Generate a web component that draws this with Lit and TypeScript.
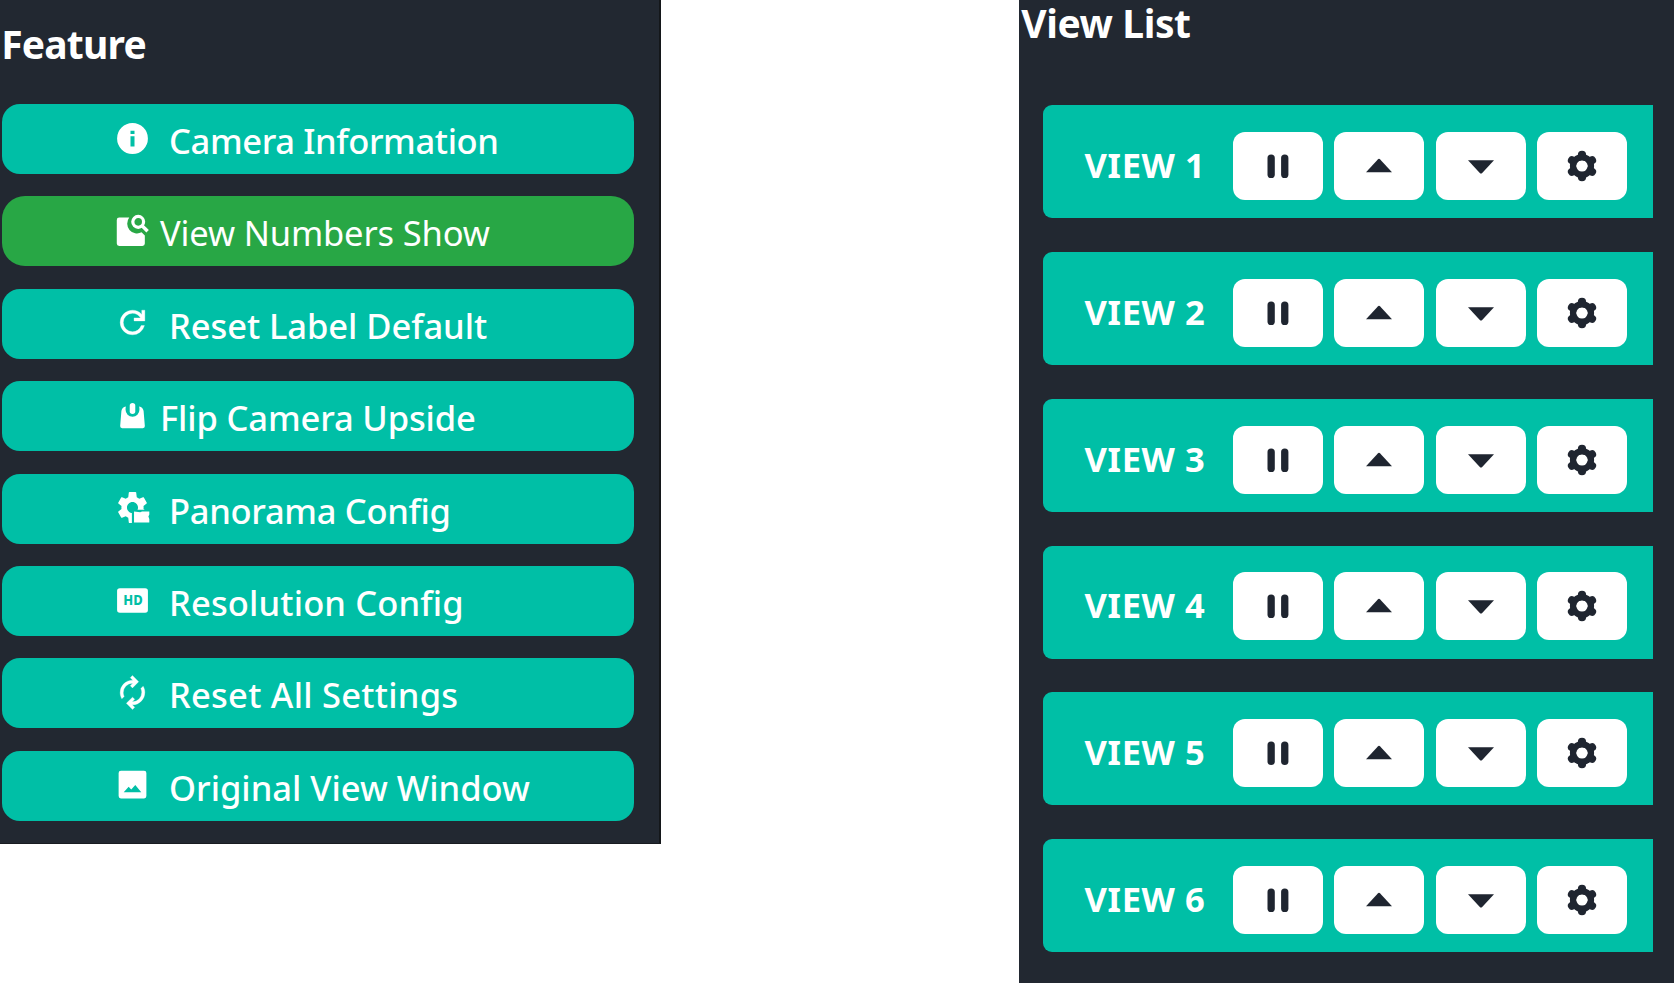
import { LitElement, html, css, svg, nothing, type TemplateResult } from "lit";
import { customElement, property } from "lit/decorators.js";

const GEAR =
  "M19.14 12.94c.04-.3.06-.61.06-.94 0-.32-.02-.64-.07-.94l2.03-1.58c.18-.14.23-.41.12-.61l-1.92-3.32c-.12-.22-.37-.29-.59-.22l-2.39.96c-.5-.38-1.03-.7-1.62-.94L14.4 2.3c-.04-.24-.24-.41-.48-.41h-3.84c-.24 0-.43.17-.47.41l-.36 3.05c-.59.24-1.13.57-1.62.94l-2.39-.96c-.22-.08-.47 0-.59.22L2.74 8.87c-.12.21-.08.47.12.61l2.03 1.58c-.05.3-.09.63-.09.94s.02.64.07.94l-2.03 1.58c-.18.14-.23.41-.12.61l1.92 3.32c.12.22.37.29.59.22l2.39-.96c.5.38 1.03.7 1.62.94l.36 3.05c.05.24.24.41.48.41h3.84c.24 0 .44-.17.47-.41l.36-3.05c.59-.24 1.13-.56 1.62-.94l2.39.96c.22.08.47 0 .59-.22l1.92-3.32c.12-.22.07-.47-.12-.61zM12 15.6c-1.98 0-3.6-1.62-3.6-3.6s1.62-3.6 3.6-3.6 3.6 1.62 3.6 3.6-1.62 3.6-3.6 3.6z";

/* Icons of the feature menu, on a 24-unit grid. */
const FEATURE_ICONS: Record<string, TemplateResult> = {
  info: svg`<path d="M12 2a10 10 0 1 0 0 20 10 10 0 0 0 0-20zm1.3 15.2h-2.6v-6.6h2.6zm0-8.1h-2.6V6.900h2.600z"/>`,
  find: svg`
    <path d="M3.4 3.6H9.900a6.400 6.400 0 0 0 8 9.600L20 15.200v5.200a1.600 1.600 0 0 1-1.600 1.600h-15a1.600 1.600 0 0 1-1.600-1.600V5.200a1.600 1.600 0 0 1 1.600-1.600z"/>
    <circle cx="15.700" cy="6.400" r="3.500" fill="none" stroke="currentColor" stroke-width="2.100"/>
    <path d="M18.200 8.900l3.600 3.600" stroke="currentColor" stroke-width="2.200"/>`,
  refresh: svg`<path stroke="currentColor" stroke-width=".2" d="M12 20q-3.35 0-5.675-2.325T4 12t2.325-5.675T12 4q1.725 0 3.3.713T18 6.75V4h2v7h-7V9h4.2q-.8-1.4-2.187-2.2T12 6Q9.5 6 7.75 7.75T6 12t1.75 4.25T12 18q1.925 0 3.475-1.1T17.65 14h2.1q-.7 2.65-2.85 4.325T12 20"/>`,
  flip: svg`
    <path d="M7.700 6.100C7.500 6.900 7.500 7.700 7.500 8.300a4.500 4.500 0 0 0 9 0c0-.6 0-1.400-.2-2.200 1.700.3 2.700 1.400 2.900 3l.8 9.700a1.300 1.300 0 0 1-1.300 1.400H5.300A1.300 1.300 0 0 1 4 18.800l.8-9.700c.2-1.600 1.200-2.700 2.900-3z"/>
    <rect x="10.200" y="3.900" width="3.600" height="7.200" rx="1.800"/>`,
  panorama: svg`
    <clipPath id="corner"><path d="M0 0H24V13.400H11.600V24H0z"/></clipPath>
    <path d="${GEAR}" clip-path="url(#corner)"/>
    <path d="M13 14.600l4 .5 1.200-.5h4.700v1.900l-.6 1.400.600 1.600v2.200h-9.900z"/>`,
  hd: svg`
    <rect x="2" y="4" width="20" height="16" rx="1.800"/>
    <text x="6" y="15" textLength="12.600" lengthAdjust="spacingAndGlyphs" class="hd">HD</text>`,
  reload: svg`<path stroke="currentColor" stroke-width=".2" d="M5.1 16.05q-.55-.95-.825-1.95T4 12.05q0-3.35 2.325-5.7T12 4h.175l-1.6-1.6 1.4-1.4 4 4-4 4-1.4-1.4 1.6-1.6H12q-2.5 0-4.25 1.763T6 12.05q0 .65.15 1.275t.45 1.225zM12.025 23l-4-4 4-4 1.4 1.4-1.6 1.6H12q2.5 0 4.25-1.762T18 11.95q0-.65-.15-1.275T17.4 9.45l1.5-1.5q.55.95.825 1.95T20 11.95q0 3.35-2.325 5.7T12 20h-.175l1.6 1.6z"/>`,
  image: svg`<path fill-rule="evenodd" d="M4.500 3h15A1.500 1.500 0 0 1 21 4.500v15a1.500 1.500 0 0 1-1.500 1.500h-15A1.500 1.500 0 0 1 3 19.500v-15A1.500 1.500 0 0 1 4.500 3zM6.300 17h11.400l-3.900-4.700-2.600 3-1.700-1.800z"/>`,
};

/* Icons of the view controls, drawn around the centre of a 38px box. */
const VIEW_ICONS: TemplateResult[] = [
  svg`<rect x="-10.500" y="-11.600" width="7.300" height="23.600" rx="3.600"/><rect x="3.100" y="-11.600" width="7.300" height="23.600" rx="3.600"/>`,
  svg`<path d="M-13 6.200L-1.200-6.600Q0-7.800 1.200-6.600L13 6.200z"/>`,
  svg`<path d="M-13-5.800L-1.200 7Q0 8.200 1.200 7L13-5.800z"/>`,
  svg`<path fill="none" stroke="currentColor" stroke-width="8.200" stroke-linecap="round" d="M0-11.200V-8.500M0 11.200V8.500M-10-5.700L-7.600-4.300M10 5.700L7.600 4.300M-10 5.700L-7.600 4.300M10-5.700L7.600-4.300"/><circle r="8.900" fill="none" stroke="currentColor" stroke-width="6.400"/><circle r="5.600" fill="#fff"/>`,
];

interface Feature {
  icon: string;
  label: string;
  active?: boolean;
  tight?: boolean;
  spacing: number;
}

const FEATURES: Feature[] = [
  { icon: "info", label: "Camera Information", spacing: -0.37 },
  { icon: "find", label: "View Numbers Show", active: true, tight: true, spacing: -0.15 },
  { icon: "refresh", label: "Reset Label Default", spacing: -0.06 },
  { icon: "flip", label: "Flip Camera Upside", tight: true, spacing: -0.13 },
  { icon: "panorama", label: "Panorama Config", spacing: -0.3 },
  { icon: "hd", label: "Resolution Config", spacing: 0.15 },
  { icon: "reload", label: "Reset All Settings", spacing: 0.25 },
  { icon: "image", label: "Original View Window", spacing: 0 },
];

@customElement("feature-button")
export class FeatureButton extends LitElement {
  @property({ attribute: false }) feature!: Feature;

  static styles = css`
    :host {
      display: block;
    }
    .button {
      display: flex;
      align-items: center;
      box-sizing: border-box;
      width: 632px;
      height: 70px;
      padding: 0 0 0 112px;
      border: 0;
      border-radius: 18px;
      background: #00bfa6;
      color: #fff;
      font: 500 34.5px/46px "Noto Sans", "Open Sans", sans-serif;
      white-space: nowrap;
    }
    .active {
      border-radius: 23px;
      background: #28a745;
      font-weight: 400;
    }
    .icon {
      flex: none;
      width: 37px;
      height: 37px;
      margin: 0 18px 2px 0;
      fill: currentColor;
    }
    .tight .icon {
      margin-right: 9px;
    }
    .label {
      padding-top: 4px;
    }
    .hd {
      font: 800 8.6px "Noto Sans", sans-serif;
      fill: #00bfa6;
    }
  `;

  render() {
    const f = this.feature;
    return html`<button class="button ${f.active ? "active" : ""} ${f.tight ? "tight" : ""}">
      <svg class="icon" viewBox="0 0 24 24">${FEATURE_ICONS[f.icon] ?? nothing}</svg>
      <span class="label" style="letter-spacing:${f.spacing}px">${f.label}</span>
    </button>`;
  }
}

@customElement("view-card")
export class ViewCard extends LitElement {
  @property({ type: Number }) number = 1;

  static styles = css`
    :host {
      display: block;
    }
    .card {
      display: flex;
      box-sizing: border-box;
      width: 610px;
      height: 113px;
      padding: 26.7px 0 0 41.6px;
      border-radius: 9px 0 0 9px;
      background: #00bfa6;
    }
    .label {
      flex: none;
      width: 148.2px;
      color: #fff;
      font: 700 34.5px/65px "Noto Sans", "Open Sans", sans-serif;
      letter-spacing: 0.6px;
      white-space: nowrap;
    }
    .controls {
      display: flex;
      gap: 11.3px;
    }
    .control {
      display: grid;
      place-items: center;
      width: 90.2px;
      height: 68px;
      padding: 0;
      border: 0;
      border-radius: 12px;
      background: #fff;
      color: #1f2530;
    }
    .icon {
      width: 38px;
      height: 38px;
      fill: currentColor;
    }
  `;

  render() {
    return html`<div class="card">
      <div class="label">VIEW ${this.number}</div>
      <div class="controls">
        ${VIEW_ICONS.map(
          (icon) => html`<button class="control"><svg class="icon" viewBox="-19 -19 38 38">${icon}</svg></button>`,
        )}
      </div>
    </div>`;
  }
}

@customElement("app-root")
export class AppRoot extends LitElement {
  static styles = css`
    :host {
      display: flex;
      justify-content: space-between;
      align-items: flex-start;
      width: 1674px;
      height: 983px;
      overflow: hidden;
      background: #fff;
    }
    .panel {
      box-sizing: border-box;
      background: #222831;
    }
    .features {
      width: 660.5px;
      height: 844px;
      padding: 24.1px 0 0 2px;
      border-right: 2px solid #14171a;
      border-bottom: 1px solid #181b20;
    }
    .views {
      width: 655.5px;
      height: 983px;
      padding: 3.2px 0 0 24.5px;
    }
    .title {
      height: 40px;
      margin: 0;
      color: #fff;
      font: 700 39px/40px "Noto Sans", "Open Sans", sans-serif;
      letter-spacing: -0.4px;
    }
    .features .title {
      margin: 0 0 40px -0.8px;
      letter-spacing: -0.8px;
    }
    .views .title {
      margin: 0 0 62.3px -21.8px;
    }
    .feature-list {
      display: grid;
      gap: 22.4px;
    }
    .view-list {
      display: grid;
      gap: 33.7px;
    }
  `;

  render() {
    return html`
      <section class="panel features">
        <h2 class="title">Feature</h2>
        <div class="feature-list">
          ${FEATURES.map((f) => html`<feature-button .feature=${f}></feature-button>`)}
        </div>
      </section>
      <section class="panel views">
        <h2 class="title">View List</h2>
        <div class="view-list">
          ${[1, 2, 3, 4, 5, 6].map((n) => html`<view-card .number=${n}></view-card>`)}
        </div>
      </section>
    `;
  }
}
